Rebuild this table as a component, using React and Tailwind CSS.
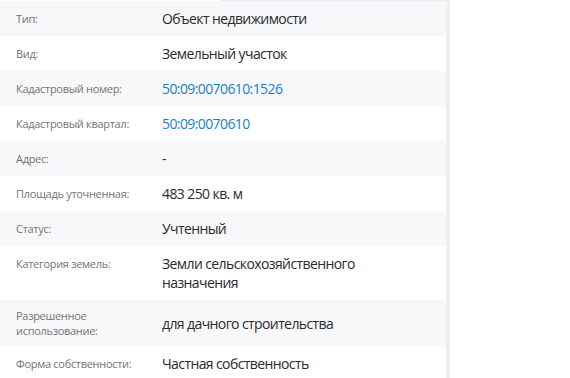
import React from 'react';

const rows = [
  { label: 'Тип:', value: 'Объект недвижимости' },
  { label: 'Вид:', value: 'Земельный участок' },
  { label: 'Кадастровый номер:', value: '50:09:0070610:1526', link: true },
  { label: 'Кадастровый квартал:', value: '50:09:0070610', link: true },
  { label: 'Адрес:', value: '-' },
  { label: 'Площадь уточненная:', value: '483 250 кв. м' },
  { label: 'Статус:', value: 'Учтенный' },
  { label: 'Категория земель:', value: 'Земли сельскохозяйственного назначения', top: true },
  { label: 'Разрешенное использование:', value: 'для дачного строительства' },
  { label: 'Форма собственности:', value: 'Частная собственность' },
];

export default function App() {
  return (
    <div className="w-[570px] h-[378px] overflow-hidden bg-white font-['Open_Sans',sans-serif]">
      <div className="w-[450px] border-r-4 border-[#efefef]">
        <div className="flex h-px">
          <div className="w-[220px] bg-white" />
          <div className="flex-1 bg-[#eceef3]" />
        </div>
        {rows.map((r, i) => (
          <div
            key={r.label}
            className={`flex items-center py-2 ${i % 2 === 0 ? 'bg-[#f7f8fa]' : 'bg-white'}`}
          >
            <div
              className={`w-[162px] shrink-0 pl-4 pr-3 text-[11px] leading-[15px] tracking-[-0.3px] text-[#747474] ${r.top ? 'self-start pt-[2px]' : ''}`}
            >
              {r.label}
            </div>
            <div
              className={`pr-4 text-[14px] leading-[19px] tracking-[-0.6px] ${r.link ? 'text-[#1a7fc4]' : 'text-[#2b2b2b]'}`}
            >
              {r.value}
            </div>
          </div>
        ))}
      </div>
    </div>
  );
}
